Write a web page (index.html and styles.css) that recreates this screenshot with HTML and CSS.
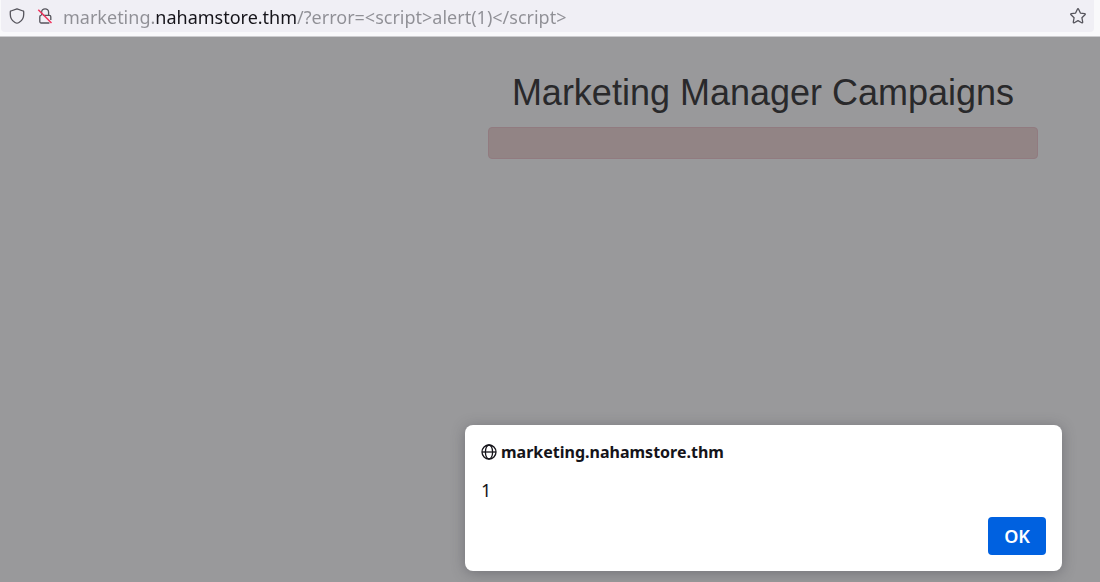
FILE: index.html
```
<!DOCTYPE html>
<html lang="en">
<head>
<meta charset="utf-8">
<meta name="viewport" content="width=device-width, initial-scale=1">
<title>Marketing Manager Campaigns</title>
<link rel="stylesheet" href="styles.css">
</head>
<body>
<header class="toolbar">
  <form class="urlbar">
    <button class="icon-button" type="button" aria-label="Tracking protection">
      <svg class="icon" viewBox="0 0 16 16" aria-hidden="true"><path d="M8 .8 14.100 3c.4.1.6.4.6.8v2.600c0 3.600-2.100 6.500-4.700 8.100-1.300.800-2.700.800-4 0C3.400 12.900 1.300 10 1.300 6.400V3.800c0-.4.2-.7.6-.8z"/></svg>
    </button>
    <button class="icon-button" type="button" aria-label="Connection not secure">
      <svg class="icon" viewBox="0 0 16 16" aria-hidden="true"><path d="M4.600 7.400V4.300a3.500 3.500 0 0 1 7 0v3.100M6 7.400h6.400c.8 0 1.400.6 1.400 1.400v3.200M12.400 15H4.200c-.8 0-1.400-.6-1.400-1.400V8.800c0-.8.6-1.400 1.400-1.400"/><path class="strike" d="M1.300 1.800 14.500 15"/></svg>
    </button>
    <input class="url" type="text" aria-label="Address" spellcheck="false" value="marketing.nahamstore.thm/?error=&lt;script&gt;alert(1)&lt;/script&gt;">
    <button class="icon-button" type="button" aria-label="Bookmark this page">
      <svg class="icon" viewBox="0 0 16 16" aria-hidden="true"><path d="M7.400 1.200c.3-.6.9-.6 1.200 0l1.800 3.900 4.200.5c.7.1.9.7.4 1.200l-3.100 2.900.8 4.300c.1.700-.4 1-1 .7L8 12.600l-3.700 2.100c-.6.3-1.100 0-1-.7l.8-4.300L1 6.800c-.5-.5-.3-1.100.4-1.200l4.200-.5z"/></svg>
    </button>
  </form>
</header>
<div class="viewport">
  <main class="content">
    <h1 class="title">Marketing Manager Campaigns</h1>
    <div class="alert" role="alert"></div>
  </main>
  <dialog class="prompt" open aria-labelledby="prompt-origin">
    <h2 class="origin" id="prompt-origin">
      <svg class="globe" viewBox="0 0 16 16" aria-hidden="true"><circle cx="8" cy="8" r="7"/><ellipse cx="8" cy="8" rx="3.600" ry="7"/><path d="M1 8h14"/></svg>
      marketing.nahamstore.thm
    </h2>
    <p class="message">1</p>
    <form class="actions" method="dialog"><button class="ok">OK</button></form>
  </dialog>
</div>
</body>
</html>
```
FILE: styles.css
```
* { box-sizing: border-box; }

body {
  margin: 0;
  min-height: 100vh;
  display: flex;
  flex-direction: column;
  font-family: "Noto Sans", sans-serif;
  color: #15141a;
}

.toolbar {
  padding: 0 6px 4px 1px;
  background: #f9f9fb;
  border-bottom: 1px solid #cccccf;
}

.urlbar {
  display: flex;
  align-items: center;
  height: 32px;
  padding: 0 8px;
  background: #f0eff5;
  border-radius: 0 0 4px 4px;
}

.icon-button {
  flex: none;
  display: flex;
  width: 16px;
  height: 16px;
  padding: 0;
  border: 0;
  background: none;
}

.icon-button + .icon-button { margin-left: 12px; }

.icon {
  width: 16px;
  height: 16px;
  fill: none;
  stroke: #55545c;
  stroke-width: 1.3;
  stroke-linejoin: round;
}

.icon .strike {
  stroke: #f0325c;
  stroke-width: 1.5;
}

/* The host part of the address is darker than the rest. */
.url {
  flex: 1;
  min-width: 0;
  margin-left: 10px;
  padding: 2px 0 0;
  border: 0;
  outline: 0;
  font: 18px/28px "Noto Sans", sans-serif;
  color: #8f8f95;
  background: linear-gradient(90deg, #8f8f95 92px, #15141a 92px 234px, #8f8f95 234px);
  -webkit-background-clip: text;
  background-clip: text;
  -webkit-text-fill-color: transparent;
}

.viewport {
  flex: 1;
  position: relative;
  background: #99999b;
}

.content {
  width: 50%;
  margin: 0 62px 0 auto;
  padding-top: 36px;
}

.title {
  margin: 0 0 14px;
  font: 400 36px/40px "Liberation Sans", Arial, sans-serif;
  text-align: center;
  color: #29292b;
}

.alert {
  height: 32px;
  background: #928485;
  border: 1px solid #917b80;
  border-radius: 4px;
}

.prompt {
  position: absolute;
  inset: auto 38px 11px auto;
  width: 597px;
  max-width: 90%;
  margin: 0;
  padding: 16px;
  border: 0;
  border-radius: 8px;
  background: #fff;
  color: #15141a;
  box-shadow: 0 2px 14px rgba(58, 57, 68, 0.4);
}

.origin {
  display: flex;
  align-items: center;
  gap: 4px;
  margin: 0;
  font-size: 16px;
  line-height: 22px;
  font-weight: 700;
}

.globe {
  width: 16px;
  height: 16px;
  fill: none;
  stroke: #15141a;
  stroke-width: 1.3;
}

.message {
  margin: 16px 0;
  font-size: 18px;
  line-height: 22px;
}

.actions {
  display: flex;
  justify-content: flex-end;
  margin: 0;
}

.ok {
  height: 38px;
  padding: 0 16px;
  border: 0;
  border-radius: 4px;
  background: #0061e0;
  color: #fff;
  font: 600 18px/22px "Noto Sans", sans-serif;
}
```
